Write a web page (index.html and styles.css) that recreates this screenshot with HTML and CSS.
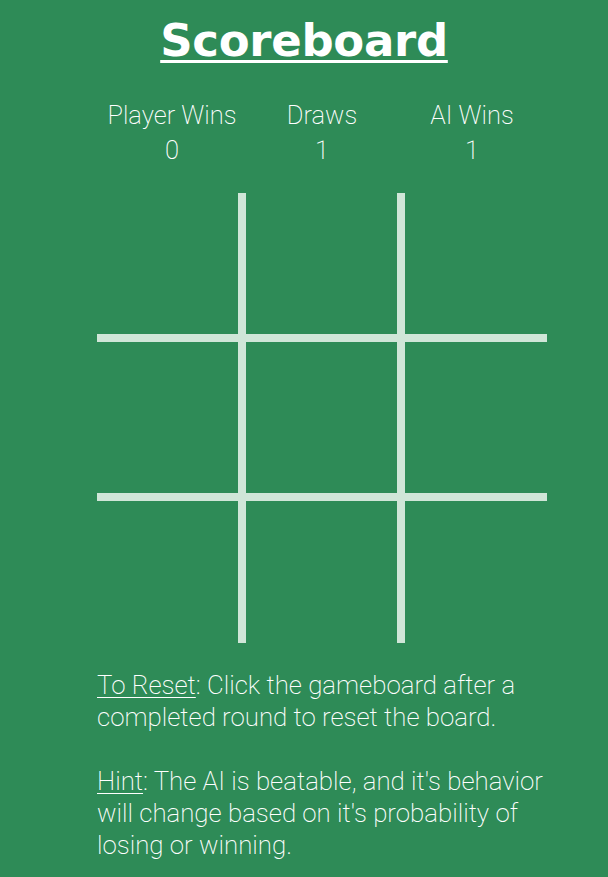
FILE: index.html
```html
<!DOCTYPE html>
<html>
<head>
<meta charset="utf-8">
<link rel="stylesheet" href="styles.css">
</head>
<body>
<h1 class="title">Scoreboard</h1>
<div class="main">
  <div class="scores">
    <div class="score"><div>Player Wins</div><div>0</div></div>
    <div class="score"><div>Draws</div><div>1</div></div>
    <div class="score"><div>AI Wins</div><div>1</div></div>
  </div>
  <div class="board">
    <div class="cell"></div><div class="cell"></div><div class="cell"></div>
    <div class="cell"></div><div class="cell"></div><div class="cell"></div>
    <div class="cell"></div><div class="cell"></div><div class="cell"></div>
  </div>
  <p class="note"><u>To Reset</u>: Click the gameboard after a completed round to reset the board.</p>
  <p class="note"><u>Hint</u>: The AI is beatable, and it's behavior will change based on it's probability of losing or winning.</p>
</div>
</body>
</html>
```
FILE: styles.css
```css
html, body {
  margin: 0;
  padding: 0;
  background: #2e8b57;
}
body {
  color: #ffffff;
  font-family: Roboto, "Liberation Sans", sans-serif;
  font-weight: 200;
  min-height: 877px;
  overflow: hidden;
}
.title {
  margin: 13px 0 0;
  text-align: center;
  font-family: "DejaVu Sans", sans-serif;
  font-weight: bold;
  font-size: 45px;
  line-height: 56px;
  letter-spacing: -0.3px;
  text-decoration: underline;
  text-decoration-thickness: 3px;
  text-underline-offset: 4px;
}
.main {
  width: 458px;
  margin: 29px 0 0 97px;
}
.scores {
  display: grid;
  grid-template-columns: 150px 150px 150px;
  font-size: 25.5px;
  line-height: 35px;
  text-align: center;
}
.board {
  margin-top: 25px;
  width: 450px;
  display: grid;
  grid-template-columns: 141px 151px 142px;
  grid-template-rows: 141px 151px 142px;
  gap: 8px;
  background: #d0e6d8;
}
.cell {
  background: #2e8b57;
}
.note {
  margin: 26px 0 0;
  font-size: 25.8px;
  line-height: 32px;
}
.note + .note {
  margin-top: 32px;
}
.note u {
  text-decoration-thickness: 1px;
  text-underline-offset: 3px;
}
```
